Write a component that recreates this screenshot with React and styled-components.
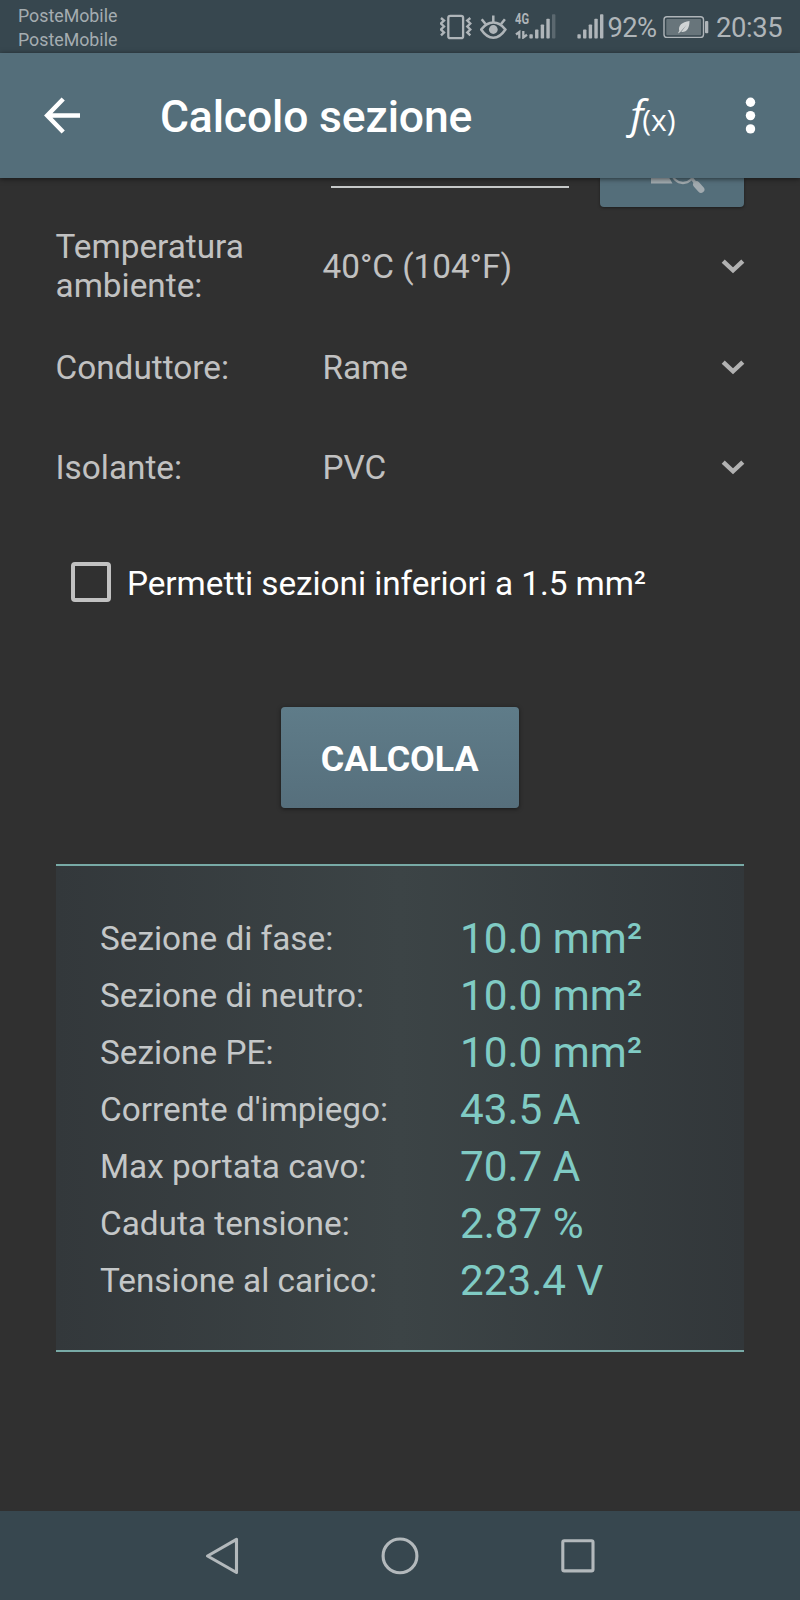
import React from 'react';
import styled, { createGlobalStyle } from 'styled-components';

const GlobalStyle = createGlobalStyle`
  *, *::before, *::after { box-sizing: border-box; }
  body { margin: 0; background: #303030; }
  svg { display: block; flex: none; }
`;

const Screen = styled.div`
  display: flex;
  flex-direction: column;
  width: 800px;
  height: 1600px;
  overflow: hidden;
  background: #303030;
  color: #c1c1c1;
  font-family: Roboto, 'Liberation Sans', sans-serif;
  font-size: 33.33px;
  line-height: 39px;
  white-space: nowrap;
`;

const StatusBar = styled.header`
  display: flex;
  flex: none;
  height: 53px;
  background: #37474f;
  color: #afb5b9;
`;

const Carriers = styled.div`
  width: 440px;
  padding: 4px 0 0 18px;
  font-size: 17.8px;
  line-height: 24px;
  color: #a5adb1;
`;

const StatusIcons = styled.div`
  display: flex;
  align-items: flex-start;
  height: 53px;
`;

const StatusText = styled.span`
  width: ${(p) => p.$width}px;
  padding-top: 12px;
  font-size: 27.4px;
  line-height: 32px;
  letter-spacing: ${(p) => p.$spacing}px;
`;

const Toolbar = styled.div`
  position: relative;
  z-index: 1;
  display: flex;
  flex: none;
  align-items: center;
  height: 125px;
  padding-left: 44px;
  background: #546e7a;
  color: #fff;
  box-shadow: 0 1px 5px rgba(0, 0, 0, 0.55);
`;

const Title = styled.h1`
  width: 465px;
  margin: 2px 0 0 79px;
  font-size: 44.44px;
  font-weight: 500;
  line-height: 52px;
  letter-spacing: -0.15px;
`;

const FormulaButton = styled.div`
  display: flex;
  align-items: flex-start;
  width: 120px;
  padding-left: 1px;
  font-family: 'Open Sans', 'Noto Sans', sans-serif;
  line-height: 50px;
`;

const FormulaF = styled.span`
  font-size: 42px;
  font-style: italic;
  font-weight: 500;
  letter-spacing: -7px;
`;

const FormulaX = styled.span`
  padding-top: 8px;
  font-size: 30px;
  font-weight: 500;
`;

const Content = styled.main`
  display: flex;
  flex: none;
  flex-direction: column;
  height: 1333px;
  padding: 0 56px 0 55.5px;
  overflow: hidden;
`;

const FieldRow = styled.div`
  display: flex;
  flex: none;
  align-items: flex-start;
  height: 38px;
  padding-left: 275.5px;
`;

const FieldLine = styled.div`
  width: 238px;
  height: 10px;
  margin-right: 31px;
  border-bottom: 2px solid #c6c9c9;
`;

const SearchButton = styled.div`
  display: flex;
  justify-content: center;
  width: 144px;
  height: 28.5px;
  padding-left: 12px;
  background: #546e7a;
  border-radius: 0 0 4px 4px;
  box-shadow: 0 1px 3px rgba(0, 0, 0, 0.4);
`;

const SelectRow = styled.div`
  display: flex;
  flex: none;
  align-items: center;
  height: 100.8px;
`;

const SelectLabel = styled.div`
  flex: none;
  width: 267px;
  white-space: pre-line;
`;

const SelectValue = styled.div`
  flex: none;
  width: 398px;
  letter-spacing: -0.04px;
`;

const CheckRow = styled.label`
  display: flex;
  flex: none;
  align-items: center;
  height: 40px;
  margin: 43.7px 0 0 15.5px;
  color: #fff;
`;

const CheckBox = styled.span`
  width: 40px;
  height: 40px;
  margin-right: 16px;
  border: 4.5px solid #c1c1c1;
  border-radius: 4px;
`;

const CheckLabel = styled.span`
  padding-top: 3px;
  letter-spacing: -0.06px;
`;

const CalcButton = styled.button`
  flex: none;
  align-self: center;
  width: 238.5px;
  height: 101.5px;
  margin-top: 104.5px;
  padding: 3px 0 0;
  border: 0;
  border-radius: 4px;
  background: linear-gradient(#5f7c89, #566f7c);
  box-shadow: 0 1px 4px rgba(0, 0, 0, 0.5);
  color: #fff;
  font: 700 35.9px/42px Roboto, 'Liberation Sans', sans-serif;
`;

const Results = styled.section`
  flex: none;
  height: 488px;
  margin-top: 55.6px;
  padding: 45.3px 0 0 44.5px;
  border: solid #78aaa6;
  border-width: 2.4px 0;
  background: linear-gradient(90deg, #33383b, #3c4446 50%, #32373a);
`;

const ResultRow = styled.div`
  display: flex;
  height: 57px;
  line-height: 56px;
`;

const ResultLabel = styled.span`
  width: 360px;
  color: #c4c7c8;
`;

const ResultValue = styled.span`
  font-size: 42.22px;
  color: #80cbc4;
`;

const NavBar = styled.nav`
  display: flex;
  flex: none;
  align-items: center;
  justify-content: space-between;
  height: 89px;
  padding: 0 204px;
  background: #37474f;
`;

const VibrateIcon = () => (
  <svg width="40" height="53" viewBox="440 0 40 53" fill="none" stroke="currentColor" strokeWidth="2.3">
    <rect x="448.3" y="15.8" width="14.8" height="22.4" rx="2" />
    <path d="M441 18l3 2.500-3 3 3 3-3 3 3 3-3 2.800" strokeWidth="2.4" />
    <path d="M470.300 18l-3 2.500 3 3-3 3 3 3-3 3 3 2.800" strokeWidth="2.4" />
  </svg>
);

const EyeIcon = () => (
  <svg width="35" height="53" viewBox="480 0 35 53" fill="none" stroke="currentColor" strokeWidth="2.5">
    <path d="M481.200 29.500C485 24.500 489 22.500 493.300 22.500s8.300 2 12.100 7c-3.800 5.800-7.800 8.200-12.100 8.200s-8.300-2.400-12.100-8.200z" />
    <path d="M493.300 22v-6.500M485.500 24l-3.800-4.800M501.100 24l3.800-4.800" />
    <circle cx="493.300" cy="29.500" r="4.400" fill="currentColor" stroke="none" />
  </svg>
);

const MobileData = styled.div`
  display: flex;
  flex-direction: column;
  width: 14px;
  padding-top: 12px;
  font-size: 15.5px;
  font-weight: 700;
  line-height: 15px;
`;

const NetworkLabel = styled.span`
  transform: scaleX(0.72);
  transform-origin: left;
`;

const DataArrows = () => (
  <svg width="14" height="12" viewBox="515 27 14 12" fill="none" stroke="currentColor" strokeWidth="2.3">
    <path d="M516 34.500l3.300-2.500v6.500M523.300 31v6.500l3.700-2.700" />
  </svg>
);

const SignalBars = ({ width, dimLast }) => {
  const tops = [34.3, 29.5, 24.5, 18.7, 14.2];
  return (
    <svg width={width} height="53" viewBox={`0 0 ${width} 53`} fill="currentColor">
      {tops.map((top, i) => (
        <rect key={top} x={0.4 + i * 5.65} y={top} width="3.4" height={38.5 - top} rx="0.8" opacity={dimLast && i === 4 ? 0.3 : 1} />
      ))}
    </svg>
  );
};

const BatteryIcon = () => (
  <svg width="53" height="53" viewBox="663 0 53 53" fill="none">
    <rect x="664" y="16.700" width="39.500" height="20.700" rx="3" stroke="currentColor" strokeWidth="1.400" />
    <rect x="666.300" y="19" width="34.800" height="16.200" rx="1" fill="#68757b" />
    <path d="M678.300 33.500c-.2-1 .4-1.800 1-2.500-1.300-5.500 2.500-9 10.200-10 0 7-2.500 11.500-8.300 10.900l5.300-6.900-6 6.800z" fill="#d0d4d5" />
    <rect x="705" y="21" width="3.300" height="12.300" rx="1" fill="currentColor" />
  </svg>
);

const BackIcon = () => (
  <svg width="37" height="37" viewBox="0 0 37 37" fill="none" stroke="#fff" strokeWidth="4.500">
    <path d="M36 18.500H4M19.200 2L3.200 18.500 19.200 35" />
  </svg>
);

const MoreIcon = () => (
  <svg width="12" height="38" viewBox="0 0 12 38" fill="#fff">
    <circle cx="5.500" cy="5.200" r="4.700" />
    <circle cx="5.500" cy="18.600" r="4.700" />
    <circle cx="5.500" cy="31.900" r="4.700" />
  </svg>
);

const TableSearchIcon = () => (
  <svg width="56" height="18" viewBox="650 178 56 18">
    <path d="M651 174h16l5.500 9.500H651z" fill="#a1aaaf" />
    <circle cx="683" cy="172" r="11" fill="none" stroke="#a1aaaf" strokeWidth="2.300" />
    <path d="M692 178.500l3 4" stroke="#a1aaaf" strokeWidth="3" />
    <path d="M696.500 184.500l4.500 5" stroke="#a1aaaf" strokeWidth="6.800" strokeLinecap="round" />
  </svg>
);

const ChevronIcon = () => (
  <svg width="24" height="15" viewBox="0 0 24 15" fill="none" stroke="#b1b1b1" strokeWidth="4.500">
    <path d="M2.200 2.200L12 11.300 21.800 2.200" />
  </svg>
);

const NavIcon = ({ children }) => (
  <svg width="38" height="38" viewBox="0 0 38 38" fill="none" stroke="#b3b9bc" strokeWidth="3.100" strokeLinejoin="round">
    {children}
  </svg>
);

const options = [
  { label: 'Temperatura\nambiente:', value: '40°C (104°F)' },
  { label: 'Conduttore:', value: 'Rame' },
  { label: 'Isolante:', value: 'PVC' },
];

const results = [
  ['Sezione di fase:', '10.0 mm²'],
  ['Sezione di neutro:', '10.0 mm²'],
  ['Sezione PE:', '10.0 mm²'],
  ["Corrente d'impiego:", '43.5 A'],
  ['Max portata cavo:', '70.7 A'],
  ['Caduta tensione:', '2.87 %'],
  ['Tensione al carico:', '223.4 V'],
];

export default function App() {
  return (
    <>
      <GlobalStyle />
      <Screen>
        <StatusBar>
          <Carriers>
            <div>PosteMobile</div>
            <div>PosteMobile</div>
          </Carriers>
          <StatusIcons>
            <VibrateIcon />
            <EyeIcon />
            <MobileData>
              <NetworkLabel>4G</NetworkLabel>
              <DataArrows />
            </MobileData>
            <SignalBars width={47.5} dimLast />
            <SignalBars width={31} />
            <StatusText $width={55.5} $spacing={-0.6}>92%</StatusText>
            <BatteryIcon />
            <StatusText $width={80} $spacing={-0.4}>20:35</StatusText>
          </StatusIcons>
        </StatusBar>
        <Toolbar>
          <BackIcon />
          <Title>Calcolo sezione</Title>
          <FormulaButton>
            <FormulaF>ƒ</FormulaF>
            <FormulaX>(x)</FormulaX>
          </FormulaButton>
          <MoreIcon />
        </Toolbar>
        <Content>
          <FieldRow>
            <FieldLine />
            <SearchButton>
              <TableSearchIcon />
            </SearchButton>
          </FieldRow>
          {options.map(({ label, value }) => (
            <SelectRow key={label}>
              <SelectLabel>{label}</SelectLabel>
              <SelectValue>{value}</SelectValue>
              <ChevronIcon />
            </SelectRow>
          ))}
          <CheckRow>
            <CheckBox />
            <CheckLabel>Permetti sezioni inferiori a 1.5 mm²</CheckLabel>
          </CheckRow>
          <CalcButton>CALCOLA</CalcButton>
          <Results>
            {results.map(([label, value]) => (
              <ResultRow key={label}>
                <ResultLabel>{label}</ResultLabel>
                <ResultValue>{value}</ResultValue>
              </ResultRow>
            ))}
          </Results>
        </Content>
        <NavBar>
          <NavIcon>
            <path d="M3.500 19L32.500 2.300V35.500z" />
          </NavIcon>
          <NavIcon>
            <circle cx="19" cy="18.900" r="16.900" />
          </NavIcon>
          <NavIcon>
            <rect x="4.800" y="3.700" width="30.200" height="30.200" rx="1.500" />
          </NavIcon>
        </NavBar>
      </Screen>
    </>
  );
}
